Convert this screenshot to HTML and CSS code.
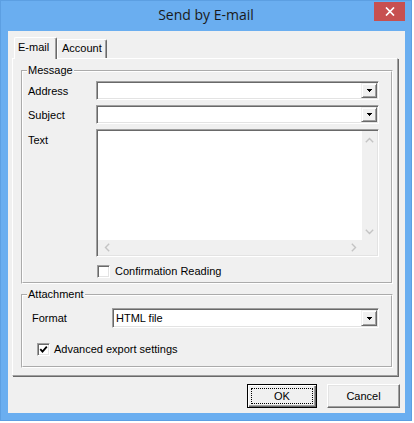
FILE: index.html
```html
<!DOCTYPE html>
<html>
<head>
<meta charset="utf-8">
<title>Send by E-mail</title>
<link rel="stylesheet" href="styles.css">
</head>
<body>
<div class="window">
  <div class="titlebar">
    <span class="title">Send by E-mail</span>
    <span class="close"><svg width="10" height="9" viewBox="0 0 10 9"><path d="M1 0.5 L9 8.5 M9 0.5 L1 8.5" stroke="#fff" stroke-width="1.7" fill="none"/></svg></span>
  </div>
  <div class="client">
    <div class="tabs">
      <div class="tabstrip">
        <div class="tab active">E-mail</div>
        <div class="tab inactive">Account</div>
      </div>
      <div class="panel">
        <fieldset class="group group-message">
          <legend>Message</legend>
          <div class="msg-grid">
            <span class="lbl">Address</span>
            <div class="combo"><span class="combo-text"></span><span class="drop"><svg width="5" height="3" viewBox="0 0 5 3" shape-rendering="crispEdges"><path d="M0 0h5v1H0zM1 1h3v1H1zM2 2h1v1H2z" fill="#000"/></svg></span></div>
            <span class="lbl">Subject</span>
            <div class="combo"><span class="combo-text"></span><span class="drop"><svg width="5" height="3" viewBox="0 0 5 3" shape-rendering="crispEdges"><path d="M0 0h5v1H0zM1 1h3v1H1zM2 2h1v1H2z" fill="#000"/></svg></span></div>
            <span class="lbl lbl-top">Text</span>
            <div class="memo">
              <div class="memo-content"></div>
              <div class="vscroll">
                <span class="sarrow"><svg width="9" height="6" viewBox="0 0 9 6"><path d="M0.8 5.2 L4.5 1.5 L8.2 5.2" stroke="#c4c4c4" stroke-width="1.4" fill="none"/></svg></span>
                <span class="sarrow"><svg width="9" height="6" viewBox="0 0 9 6"><path d="M0.8 0.8 L4.5 4.5 L8.2 0.8" stroke="#c4c4c4" stroke-width="1.4" fill="none"/></svg></span>
              </div>
              <div class="hscroll">
                <span class="sarrow"><svg width="6" height="9" viewBox="0 0 6 9"><path d="M5.2 0.8 L1.5 4.5 L5.2 8.2" stroke="#c4c4c4" stroke-width="1.4" fill="none"/></svg></span>
                <span class="sarrow"><svg width="6" height="9" viewBox="0 0 6 9"><path d="M0.8 0.8 L4.5 4.5 L0.8 8.2" stroke="#c4c4c4" stroke-width="1.4" fill="none"/></svg></span>
              </div>
              <div class="corner"></div>
            </div>
            <label class="check check-confirm"><span class="box"></span>Confirmation Reading</label>
          </div>
        </fieldset>
        <fieldset class="group group-attach">
          <legend>Attachment</legend>
          <div class="att-grid">
            <span class="lbl">Format</span>
            <div class="combo combo-format"><span class="combo-text">HTML file</span><span class="drop"><svg width="5" height="3" viewBox="0 0 5 3" shape-rendering="crispEdges"><path d="M0 0h5v1H0zM1 1h3v1H1zM2 2h1v1H2z" fill="#000"/></svg></span></div>
            <label class="check check-adv"><span class="box"><svg width="9" height="9" viewBox="0 0 9 9"><path d="M1.3 4.2 L3.5 6.6 L7.8 1.6" stroke="#000" stroke-width="1.8" fill="none"/></svg></span>Advanced export settings</label>
          </div>
        </fieldset>
      </div>
    </div>
    <div class="buttons">
      <button class="btn btn-default"><span class="focus">OK</span></button>
      <button class="btn btn-cancel">Cancel</button>
    </div>
  </div>
</div>
</body>
</html>
```
FILE: styles.css
```css
* { box-sizing: border-box; }
html, body { margin: 0; padding: 0; background: #ffffff; }
body { font-family: "Liberation Sans", Arial, sans-serif; font-size: 11px; color: #000; }

.window {
  width: 412px;
  height: 421px;
  background: #6aaef0;
  border: 1px solid #5c9fe2;
  display: flex;
  flex-direction: column;
}

.titlebar {
  height: 30px;
  display: grid;
  grid-template-columns: 1fr auto 1fr;
  align-items: start;
}
.title {
  grid-column: 2;
  font-family: "Open Sans", sans-serif;
  font-size: 14px;
  line-height: 20px;
  margin-top: 4px;
  color: #1a1a1a;
  white-space: nowrap;
}
.close {
  grid-column: 3;
  justify-self: end;
  width: 31px;
  height: 19px;
  margin-top: 1px;
  margin-right: 6px;
  background: #c75050;
  display: flex;
  align-items: center;
  justify-content: center;
}

.client {
  flex: 1;
  margin: 0 6px 7px 7px;
  background: #f0f0f0;
  display: flex;
  flex-direction: column;
}

.tabs { margin: 6px 7px 0 4px; }
.tabstrip {
  height: 21px;
  display: flex;
  align-items: flex-end;
  padding-left: 2px;
}
.tab {
  background: #f0f0f0;
  border-top: 1px solid #fff;
  border-left: 1px solid #fff;
  border-right: 1px solid #696969;
  box-shadow: inset -1px 0 0 #a0a0a0;
  line-height: 13px;
  white-space: nowrap;
}
.tab.active {
  width: 43px;
  height: 22px;
  margin-bottom: -1px;
  padding: 3px 0 0 3px;
  position: relative;
  z-index: 1;
  border-top-left-radius: 2px;
  border-top-right-radius: 2px;
}
.tab.inactive {
  width: 50px;
  height: 19px;
  padding: 2px 0 0 4px;
  border-left: 1px solid #fff;
  border-top-right-radius: 2px;
}

.panel {
  height: 318px;
  border-left: 1px solid #fff;
  border-top: 1px solid #fff;
  border-right: 1px solid #a0a0a0;
  border-bottom: 1px solid #a0a0a0;
  box-shadow: 1px 1px 0 #696969;
  display: flex;
  flex-direction: column;
}

.group {
  margin: 0;
  padding: 0;
  min-width: 0;
  border: 2px groove #ffffff;
}
.group legend {
  padding: 0 1px;
  margin-left: 4px;
  line-height: 13px;
}
.group-message { margin: 5px 4px 0 8px; }
.group-attach { margin: 4px 4px 0 8px; }

.msg-grid {
  display: grid;
  grid-template-columns: 68px 1fr;
  grid-template-rows: 19px 19px 128px auto;
  row-gap: 5px;
  padding: 4px 12px 4px 5px;
}
.att-grid {
  display: grid;
  grid-template-columns: 80px 1fr;
  padding: 7px 12px 10px 9px;
}

.lbl { align-self: center; line-height: 13px; padding-top: 1px; }
.lbl-top { align-self: start; padding-top: 5px; }

.combo {
  display: flex;
  background: #fff;
  border: 1px solid;
  border-color: #a0a0a0 #fff #fff #a0a0a0;
  box-shadow: inset 1px 1px 0 #696969, inset -1px -1px 0 #e3e3e3;
  padding: 1px;
}
.combo-format { height: 20px; }
.combo-text {
  flex: 1;
  line-height: 16px;
  padding-left: 2px;
  white-space: nowrap;
}
.drop {
  width: 16px;
  background: #f0f0f0;
  border: 1px solid;
  border-color: #f0f0f0 #696969 #696969 #f0f0f0;
  box-shadow: inset 1px 1px 0 #fff, inset -1px -1px 0 #a0a0a0;
  display: flex;
  align-items: center;
  justify-content: center;
}

.memo {
  display: grid;
  grid-template-columns: 1fr 15px;
  grid-template-rows: 1fr 15px;
  border: 1px solid;
  border-color: #a0a0a0 #fff #fff #a0a0a0;
  box-shadow: inset 1px 1px 0 #696969, inset -1px -1px 0 #e3e3e3;
  padding: 1px;
  background: #fff;
}
.memo-content { background: #fff; }
.vscroll {
  background: #f0f0f0;
  display: flex;
  flex-direction: column;
  justify-content: space-between;
}
.hscroll {
  background: #f0f0f0;
  display: flex;
  justify-content: space-between;
}
.corner { background: #f0f0f0; }
.vscroll .sarrow {
  height: 17px;
  display: flex;
  align-items: center;
  justify-content: center;
}
.hscroll .sarrow {
  width: 17px;
  display: flex;
  align-items: center;
  justify-content: center;
}

.check {
  display: flex;
  align-items: center;
  line-height: 13px;
  white-space: nowrap;
}
.check-confirm {
  grid-column: 2;
  margin-top: 3px;
  margin-left: 1px;
  gap: 5px;
}
.check-adv {
  grid-column: 1 / 3;
  margin-top: 15px;
  margin-left: 5px;
  gap: 4px;
}
.box {
  width: 13px;
  height: 13px;
  background: #fff;
  border: 1px solid;
  border-color: #a0a0a0 #fff #fff #a0a0a0;
  box-shadow: inset 1px 1px 0 #696969, inset -1px -1px 0 #e3e3e3;
  display: flex;
  align-items: center;
  justify-content: center;
}

.buttons {
  display: flex;
  justify-content: flex-end;
  gap: 10px;
  margin-top: 8px;
  padding-right: 5px;
}
.btn {
  height: 24px;
  margin: 0;
  padding: 0;
  font-family: "Liberation Sans", Arial, sans-serif;
  font-size: 11px;
  color: #000;
  background: #f0f0f0;
  display: flex;
  align-items: center;
  justify-content: center;
}
.btn-default {
  width: 70px;
  border: 1px solid #000;
  box-shadow: inset 1px 1px 0 #fff, inset -1px -1px 0 #696969, inset -2px -2px 0 #a0a0a0;
  padding: 3px;
}
.focus {
  flex: 1;
  align-self: stretch;
  border: 1px dotted #000;
  display: flex;
  align-items: center;
  justify-content: center;
}
.btn-cancel {
  width: 73px;
  border: 1px solid;
  border-color: #fff #696969 #696969 #fff;
  box-shadow: inset -1px -1px 0 #a0a0a0, inset 1px 1px 0 #e3e3e3;
}
```
